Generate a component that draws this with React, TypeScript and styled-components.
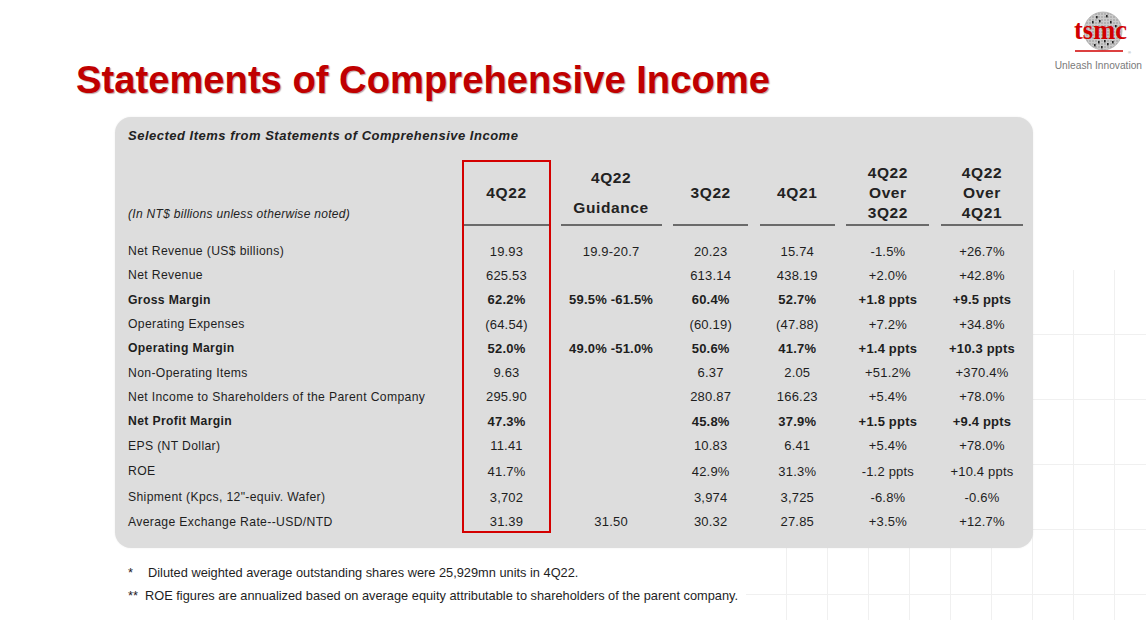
import React from "react";
import styled, { createGlobalStyle } from "styled-components";

const GlobalStyle = createGlobalStyle`
	html, body {
		margin: 0;
		padding: 0;
		background: #fff;
	}
	body {
		font-family: "Liberation Sans", Arial, sans-serif;
		color: #1a1a1a;
	}
`;

type Row = {
	label: string;
	values: string[];
	bold?: boolean;
	tall?: boolean;
};

const rows: Row[] = [
	{ label: "Net Revenue (US$ billions)", values: ["19.93", "19.9-20.7", "20.23", "15.74", "-1.5%", "+26.7%"] },
	{ label: "Net Revenue", values: ["625.53", "", "613.14", "438.19", "+2.0%", "+42.8%"] },
	{ label: "Gross Margin", bold: true, values: ["62.2%", "59.5% -61.5%", "60.4%", "52.7%", "+1.8 ppts", "+9.5 ppts"] },
	{ label: "Operating Expenses", values: ["(64.54)", "", "(60.19)", "(47.88)", "+7.2%", "+34.8%"] },
	{ label: "Operating Margin", bold: true, values: ["52.0%", "49.0% -51.0%", "50.6%", "41.7%", "+1.4 ppts", "+10.3 ppts"] },
	{ label: "Non-Operating Items", values: ["9.63", "", "6.37", "2.05", "+51.2%", "+370.4%"] },
	{ label: "Net Income to Shareholders of the Parent Company", values: ["295.90", "", "280.87", "166.23", "+5.4%", "+78.0%"] },
	{ label: "Net Profit Margin", bold: true, values: ["47.3%", "", "45.8%", "37.9%", "+1.5 ppts", "+9.4 ppts"] },
	{ label: "EPS (NT Dollar)", values: ["11.41", "", "10.83", "6.41", "+5.4%", "+78.0%"] },
	{ label: "ROE", tall: true, values: ["41.7%", "", "42.9%", "31.3%", "-1.2 ppts", "+10.4 ppts"] },
	{ label: "Shipment (Kpcs, 12\"-equiv. Wafer)", values: ["3,702", "", "3,974", "3,725", "-6.8%", "-0.6%"] },
	{ label: "Average Exchange Rate--USD/NTD", values: ["31.39", "31.50", "30.32", "27.85", "+3.5%", "+12.7%"] },
];

const headers: { lines: string[]; wide?: boolean }[] = [
	{ lines: ["4Q22"] },
	{ lines: ["4Q22", "Guidance"], wide: true },
	{ lines: ["3Q22"] },
	{ lines: ["4Q21"] },
	{ lines: ["4Q22", "Over", "3Q22"] },
	{ lines: ["4Q22", "Over", "4Q21"] },
];

const Slide = styled.div`
	width: 1146px;
	height: 620px;
	overflow: hidden;
	display: flex;
	flex-direction: column;
	background:
		repeating-linear-gradient(90deg, transparent 0 40px, #f0f0f0 40px 41px) right bottom / 400px 350px no-repeat,
		repeating-linear-gradient(180deg, transparent 0 64px, #f0f0f0 64px 65px) right bottom / 400px 350px no-repeat,
		#fff;
`;

const Header = styled.header`
	height: 117px;
	display: flex;
	justify-content: space-between;
	align-items: flex-start;
`;

const Title = styled.h1`
	margin: 60px 0 0 76px;
	font-family: "Liberation Sans", Arial, sans-serif;
	font-weight: bold;
	font-size: 38.2px;
	line-height: 39px;
	color: #c00000;
	text-shadow: 1px 1px 1px rgba(60, 0, 0, 0.35);
	white-space: nowrap;
`;

const Brand = styled.div`
	margin: 4px 4px 0 0;
	display: flex;
	flex-direction: column;
	align-items: flex-end;

	svg {
		display: block;
		margin-right: 4px;
	}
`;

const Tagline = styled.div`
	font-size: 10.2px;
	color: #7a7a7a;
	margin-top: 4px;
	white-space: nowrap;
`;

const Panel = styled.section`
	margin-left: 115px;
	width: 918px;
	height: 431px;
	box-sizing: border-box;
	padding: 10px 0 0 13px;
	background: #dddddd;
	border-radius: 16px;
	box-shadow: 0 0 2px rgba(0, 0, 0, 0.08);
`;

const PanelTitle = styled.div`
	font-size: 13px;
	font-weight: bold;
	font-style: italic;
	line-height: 17px;
	letter-spacing: 0.5px;
	color: #222;
`;

const Table = styled.div`
	margin-top: 17px;
	display: grid;
	grid-template-columns: 324.4px 85px 101px 75px 75px 83px 82px;
	column-gap: 11.6px;
	width: 895px;
`;

const HeadCell = styled.div<{ $col: number; $wide?: boolean }>`
	grid-row: 1;
	grid-column: ${({ $col }) => $col};
	height: 63px;
	margin-bottom: 13px;
	border-bottom: 2px solid #6a6a6a;
	display: flex;
	flex-direction: column;
	justify-content: center;
	align-items: center;
	text-align: center;
	font-size: 15.5px;
	font-weight: bold;
	letter-spacing: 0.6px;
	line-height: ${({ $wide }) => ($wide ? "30px" : "20px")};
	color: #222;
`;

const UnitNote = styled.div`
	grid-row: 1;
	grid-column: 1;
	height: 63px;
	display: flex;
	align-items: flex-end;
	padding-bottom: 3px;
	box-sizing: border-box;
	font-size: 12px;
	font-style: italic;
	letter-spacing: 0.3px;
	color: #222;
`;

const Highlight = styled.div`
	grid-column: 2;
	grid-row: 1 / ${rows.length + 2};
	margin: -1px -2px 1px;
	border: 2px solid #d40000;
	pointer-events: none;
`;

const Cell = styled.div<{ $row: number; $col: number; $bold?: boolean; $tall?: boolean; $label?: boolean }>`
	grid-row: ${({ $row }) => $row};
	grid-column: ${({ $col }) => $col};
	height: ${({ $tall }) => ($tall ? "27.5px" : "24.3px")};
	display: flex;
	align-items: center;
	justify-content: ${({ $label }) => ($label ? "flex-start" : "center")};
	white-space: nowrap;
	font-size: ${({ $label }) => ($label ? "12.2px" : "13px")};
	letter-spacing: ${({ $label }) => ($label ? "0.35px" : "0.2px")};
	font-weight: ${({ $bold }) => ($bold ? "bold" : "normal")};
	color: #1e1e1e;
`;

const Footnotes = styled.div`
	margin: 17px 0 0 128px;
	font-size: 12.8px;
	color: #1e1e1e;
	display: flex;
	flex-direction: column;
	gap: 7px;
`;

const Note = styled.div<{ $indent: number }>`
	display: flex;
	line-height: 16px;

	span:first-child {
		width: ${({ $indent }) => $indent}px;
		flex: none;
	}
`;

const Logo = () => (
	<svg width="70" height="52" viewBox="0 0 70 52">
		<defs>
			<pattern id="wafer" width="3" height="3" patternUnits="userSpaceOnUse">
				<rect width="3" height="3" fill="#cbcbcb" />
				<rect width="2" height="2" fill="#b2b2b2" />
			</pattern>
		</defs>
		<circle cx="35" cy="27" r="19" fill="url(#wafer)" />
		<circle cx="35" cy="27" r="19" fill="none" stroke="#9a9a9a" strokeWidth="0.6" />
		{[
			[28, 12], [38, 11], [24, 17], [31, 16], [42, 17], [47, 21],
			[26, 40], [33, 42], [39, 39], [44, 37], [30, 37], [36, 36],
		].map(([x, y], i) => (
			<rect key={i} x={x} y={y} width="1.6" height="2.4" fill="#222" />
		))}
		<text
			x="6"
			y="35"
			textLength="53"
			lengthAdjust="spacingAndGlyphs"
			fontFamily="'Liberation Serif', 'Times New Roman', serif"
			fontWeight="bold"
			fontSize="27"
			fill="#d10000"
		>
			tsmc
		</text>
		<line x1="7" y1="47" x2="55" y2="47" stroke="#d10000" strokeWidth="1.5" />
		<text x="60" y="50" fontSize="4" fill="#888" fontFamily="'Liberation Sans', sans-serif">®</text>
	</svg>
);

export default function App() {
	return (
		<>
			<GlobalStyle />
			<Slide>
				<Header>
					<Title>Statements of Comprehensive Income</Title>
					<Brand>
						<Logo />
						<Tagline>Unleash Innovation</Tagline>
					</Brand>
				</Header>
				<Panel>
					<PanelTitle>Selected Items from Statements of Comprehensive Income</PanelTitle>
					<Table>
						<UnitNote>(In NT$ billions unless otherwise noted)</UnitNote>
						{headers.map((h, i) => (
							<HeadCell key={i} $col={i + 2} $wide={h.wide}>
								{h.lines.map((l) => (
									<span key={l}>{l}</span>
								))}
							</HeadCell>
						))}
						{rows.map((r, ri) => (
							<React.Fragment key={r.label}>
								<Cell $row={ri + 2} $col={1} $label $bold={r.bold} $tall={r.tall}>
									{r.label}
								</Cell>
								{r.values.map((v, i) => (
									<Cell key={i} $row={ri + 2} $col={i + 2} $bold={r.bold} $tall={r.tall}>
										{v}
									</Cell>
								))}
							</React.Fragment>
						))}
						<Highlight />
					</Table>
				</Panel>
				<Footnotes>
					<Note $indent={20}>
						<span>*</span>
						<span>Diluted weighted average outstanding shares were 25,929mn units in 4Q22.</span>
					</Note>
					<Note $indent={17}>
						<span>**</span>
						<span>ROE figures are annualized based on average equity attributable to shareholders of the parent company.</span>
					</Note>
				</Footnotes>
			</Slide>
		</>
	);
}
